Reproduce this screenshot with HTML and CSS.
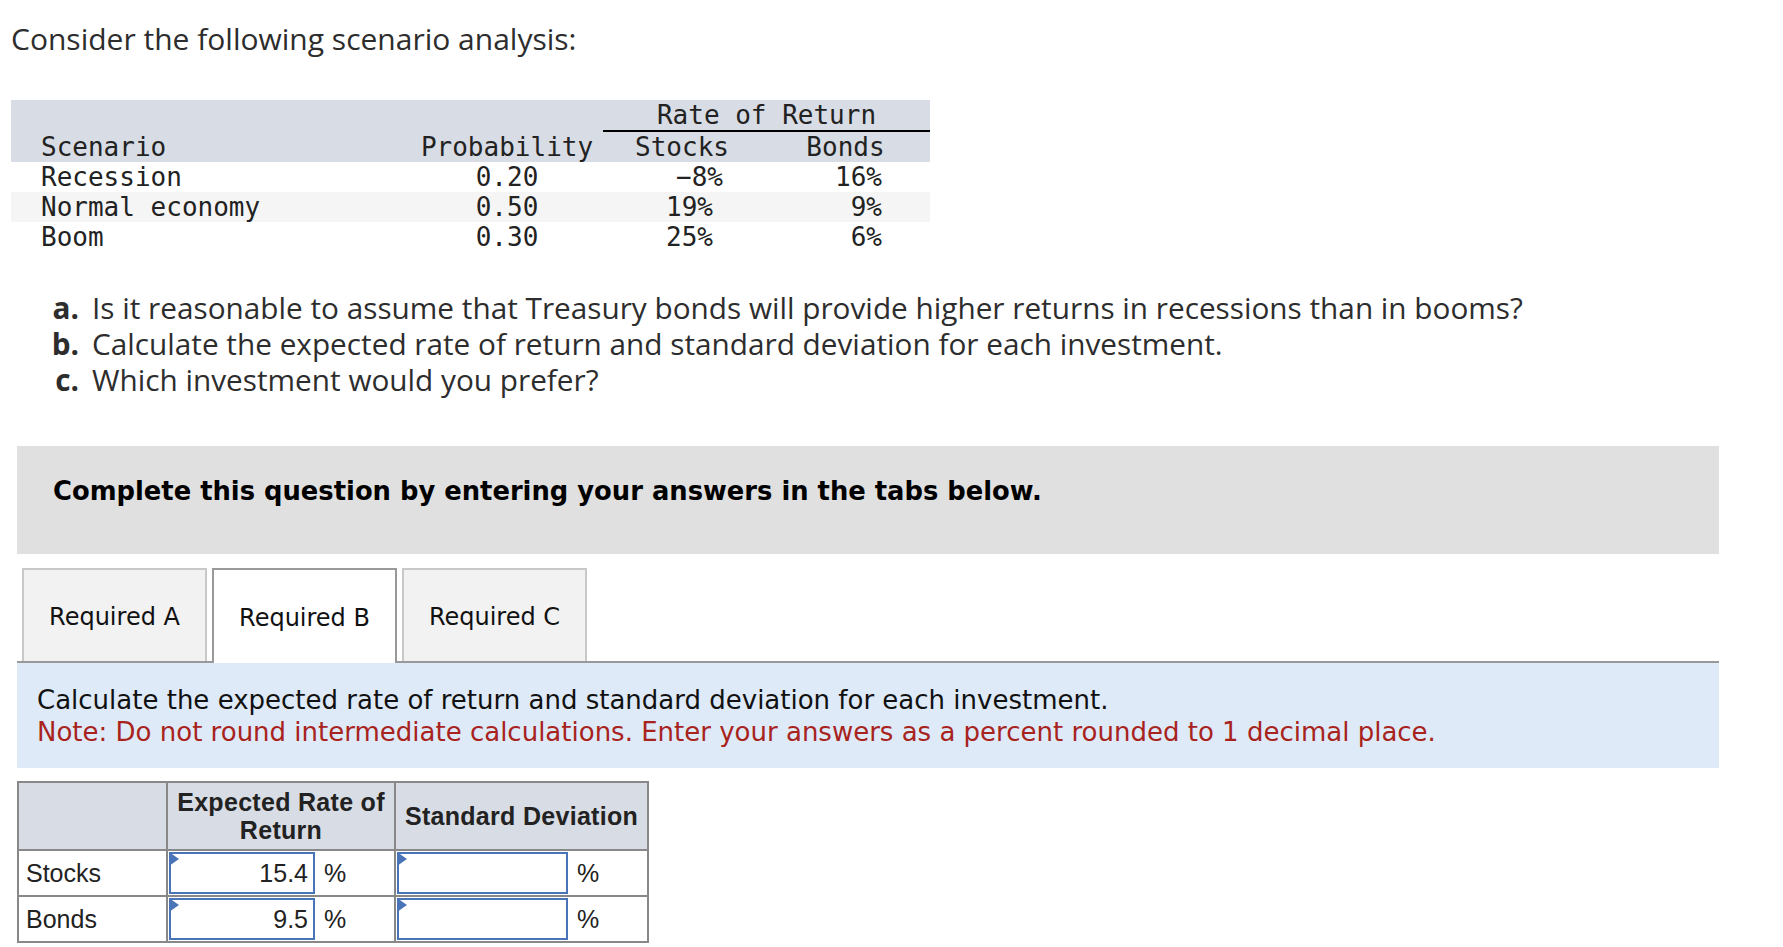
FILE: index.html
```html
<!DOCTYPE html>
<html lang="en">
<head>
<meta charset="utf-8">
<title>Scenario analysis</title>
<link rel="stylesheet" href="styles.css">
</head>
<body>
<div class="page">
  <p class="intro">Consider the following scenario analysis:</p>

  <table class="scen">
    <colgroup>
      <col class="sc1"><col class="sc2"><col class="sc3"><col class="sc4">
    </colgroup>
    <thead>
      <tr>
        <th></th><th></th><th colspan="2" class="ror">Rate of Return</th>
      </tr>
      <tr>
        <th class="c1">Scenario</th>
        <th class="c2">Probability</th>
        <th class="c3h">Stocks</th>
        <th class="c4h">Bonds</th>
      </tr>
    </thead>
    <tbody>
      <tr>
        <td class="c1">Recession</td><td class="c2">0.20</td><td class="c3 neg">&minus;8%</td><td class="c4">16%</td>
      </tr>
      <tr class="alt">
        <td class="c1">Normal economy</td><td class="c2">0.50</td><td class="c3">19%</td><td class="c4">9%</td>
      </tr>
      <tr>
        <td class="c1">Boom</td><td class="c2">0.30</td><td class="c3">25%</td><td class="c4">6%</td>
      </tr>
    </tbody>
  </table>

  <ul class="questions">
    <li class="q"><span class="ql">a.</span><span class="qt">Is it reasonable to assume that Treasury bonds will provide higher returns in recessions than in booms?</span></li>
    <li class="q"><span class="ql">b.</span><span class="qt">Calculate the expected rate of return and standard deviation for each investment.</span></li>
    <li class="q"><span class="ql">c.</span><span class="qt">Which investment would you prefer?</span></li>
  </ul>

  <div class="work">
    <div class="instr">Complete this question by entering your answers in the tabs below.</div>

    <div class="tabs">
      <div class="tab">Required A</div>
      <div class="tab active">Required B</div>
      <div class="tab">Required C</div>
    </div>

    <div class="panel">
      <p>Calculate the expected rate of return and standard deviation for each investment.</p>
      <p class="note">Note: Do not round intermediate calculations. Enter your answers as a percent rounded to 1 decimal place.</p>
    </div>

    <table class="ans">
      <colgroup>
        <col class="a1"><col class="a2"><col class="a3"><col class="a4"><col class="a5">
      </colgroup>
      <thead>
        <tr>
          <th></th>
          <th colspan="2">Expected Rate of<br>Return</th>
          <th colspan="2">Standard Deviation</th>
        </tr>
      </thead>
      <tbody>
        <tr>
          <td class="lbl">Stocks</td>
          <td class="inpc"><div class="inp">15.4</div></td>
          <td class="pct">%</td>
          <td class="inpc"><div class="inp"></div></td>
          <td class="pct">%</td>
        </tr>
        <tr>
          <td class="lbl">Bonds</td>
          <td class="inpc"><div class="inp">9.5</div></td>
          <td class="pct">%</td>
          <td class="inpc"><div class="inp"></div></td>
          <td class="pct">%</td>
        </tr>
      </tbody>
    </table>
  </div>
</div>
</body>
</html>
```

FILE: styles.css
```css
body {
  margin: 0;
  background: #ffffff;
}

.page {
  padding: 0 11px;
  font-family: "Open Sans", "Liberation Sans", sans-serif;
  color: #2d2d2d;
}

.intro {
  margin: 21px 0 0 0;
  font-size: 30px;
  line-height: 36px;
}

/* scenario table */
.scen {
  margin-top: 43px;
  border-collapse: collapse;
  table-layout: fixed;
  width: 919px;
  font-family: "DejaVu Sans Mono", "Liberation Mono", monospace;
  font-size: 26px;
  line-height: 30px;
  color: #222;
}
.sc1 { width: 400px; }
.sc2 { width: 192px; }
.sc3 { width: 158px; }
.sc4 { width: 169px; }

.scen thead {
  background: #d8dce4;
}
.scen th,
.scen td {
  padding: 0;
  height: 30px;
  font-weight: normal;
  white-space: pre;
}
.scen th.ror {
  text-align: center;
  border-bottom: 2px solid #000;
}
.scen .c1 {
  text-align: left;
  padding-left: 30px;
}
.scen .c2 { text-align: center; }
.scen .c3h,
.scen .c4h { text-align: center; }
.scen .c3,
.scen .c4 {
  text-align: right;
  padding-right: 48px;
}
.scen .c3.neg { padding-right: 38px; }
.scen tr.alt { background: #f5f5f5; }

/* questions */
.questions {
  list-style: none;
  margin: 38px 0 0 30px;
  padding: 0;
  font-size: 29.75px;
  line-height: 36px;
}
.q {
  display: flex;
  height: 36px;
}
.ql {
  width: 38px;
  text-align: right;
  font-weight: 700;
  margin-right: 13px;
}

/* work area */
.work {
  margin: 48px 0 0 6px;
  width: 1702px;
}
.instr {
  background: #e0e0e0;
  height: 108px;
  box-sizing: border-box;
  padding: 30px 0 0 36px;
  font-family: "DejaVu Sans", Verdana, sans-serif;
  font-weight: bold;
  font-size: 25.8px;
  line-height: 30px;
  color: #000;
}

.tabs {
  display: flex;
  align-items: flex-end;
  gap: 5px;
  margin-top: 14px;
  padding-left: 5px;
  height: 93px;
  border-bottom: 2px solid #999;
}
.tab {
  width: 185px;
  height: 93px;
  box-sizing: border-box;
  padding-top: 3px;
  border: 2px solid #c8c8c8;
  border-bottom: 0;
  background: #f2f2f2;
  display: flex;
  align-items: center;
  justify-content: center;
  font-family: "DejaVu Sans", Verdana, sans-serif;
  font-size: 24px;
  color: #111;
}
.tab.active {
  background: #fff;
  border-color: #999;
  height: 95px;
  margin-bottom: -2px;
}

.panel {
  background: #deeaf7;
  padding: 21px 0 20px 20px;
  font-family: "DejaVu Sans", Verdana, sans-serif;
  font-size: 26px;
  line-height: 32px;
  color: #111;
}
.panel p { margin: 0; }
.panel .note { color: #a8231d; }

/* answer table */
.ans {
  margin-top: 13px;
  border-collapse: collapse;
  table-layout: fixed;
  width: 632px;
  font-family: "Liberation Sans", Arial, sans-serif;
  font-size: 25px;
  color: #222;
}
.a1 { width: 149px; }
.a2 { width: 148px; }
.a3 { width: 80px; }
.a4 { width: 173px; }
.a5 { width: 80px; }

.ans th {
  background: #d8dce4;
  border: 2px solid #888;
  height: 66px;
  padding: 0 4px;
  line-height: 28px;
  font-weight: bold;
  letter-spacing: 0.3px;
}
.ans td {
  height: 44px;
  padding: 0;
  border-top: 2px solid #888;
  border-bottom: 2px solid #888;
}
.ans td.lbl {
  border-left: 2px solid #888;
  border-right: 2px solid #888;
  padding-left: 7px;
}
.ans td.inpc {
  border-left: 2px solid #888;
  padding: 0 0 0 1px;
}
.ans td.pct {
  border-right: 2px solid #888;
  padding-left: 9px;
}
.inp {
  position: relative;
  height: 42px;
  box-sizing: border-box;
  border: 2px solid #4a74b8;
  padding-right: 5px;
  text-align: right;
  line-height: 38px;
  background: #fff;
}
.inp::before {
  content: "";
  position: absolute;
  left: -2px;
  top: -2px;
  border-left: 10px solid #4a74b8;
  border-top: 7px solid transparent;
  border-bottom: 7px solid transparent;
}
```
